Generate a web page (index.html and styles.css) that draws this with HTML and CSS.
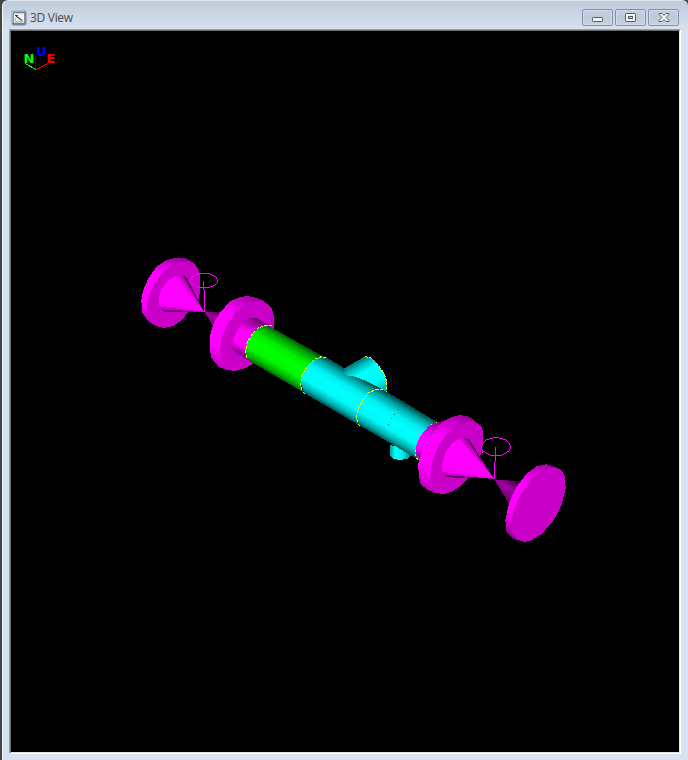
FILE: index.html
```
<!DOCTYPE html>
<html lang="en">
<head>
<meta charset="utf-8">
<title>3D View</title>
<link rel="stylesheet" href="styles.css">
</head>
<body>
<div class="window">
  <header class="titlebar">
    <svg class="app-icon" width="16" height="16" viewBox="0 0 16 16">
      <rect x=".5" y=".5" width="15" height="15" rx="2.5" fill="#7187a5" stroke="#a9b5c5"/>
      <path d="M1 13V3L3 1H13" fill="none" stroke="#c5ced9"/>
      <rect x="2.500" y="3" width="11" height="10" fill="#f4f4f4" stroke="#777" stroke-width=".6"/>
      <path d="M4 5.500h3M5 6l6 4.500" fill="none" stroke="#3d454c" stroke-width="1.200"/>
      <path d="M4.500 8v3.500H12" fill="none" stroke="#a8adb2" stroke-width=".8"/>
    </svg>
    <h1 class="title">3D View</h1>
    <div class="controls">
      <button class="control" aria-label="Minimize"><svg width="12" height="10" viewBox="0 0 12 10"><rect x=".5" y="4.500" width="10" height="4" rx=".7" fill="#f7f7f7" stroke="#555b6b"/></svg></button>
      <button class="control" aria-label="Maximize"><svg width="12" height="10" viewBox="0 0 12 10"><rect x=".5" y=".5" width="10" height="8" rx=".7" fill="#f7f7f7" stroke="#555b6b"/><rect x="3.500" y="3.500" width="4" height="2" fill="#c3d0e0" stroke="#555b6b"/></svg></button>
      <button class="control" aria-label="Close"><svg width="12" height="10" viewBox="0 0 12 10"><path d="M1 .5h3l2 2 2-2h3v1L8 4.500l3 3v1H8l-2-2-2 2H1v-1l3-3-3-3z" fill="#f7f7f7" stroke="#555b6b"/></svg></button>
    </div>
  </header>
  <main class="viewport">
    <svg class="scene" viewBox="11 31 668 721" shape-rendering="crispEdges">
      <defs>
        <linearGradient id="green" gradientUnits="userSpaceOnUse" x1="269" y1="325" x2="248" y2="361">
          <stop offset="0" stop-color="#005000"/><stop offset=".12" stop-color="#00a000"/><stop offset=".32" stop-color="#00ee00"/><stop offset=".5" stop-color="#0f0"/><stop offset=".72" stop-color="#00f800"/><stop offset=".9" stop-color="#00a800"/><stop offset="1" stop-color="#005000"/>
        </linearGradient>
        <linearGradient id="cyan" gradientUnits="userSpaceOnUse" x1="325" y1="357" x2="304" y2="393">
          <stop offset="0" stop-color="#005050"/><stop offset=".12" stop-color="#00a0a0"/><stop offset=".32" stop-color="#00f0f0"/><stop offset=".5" stop-color="#0ff"/><stop offset=".72" stop-color="#00f8f8"/><stop offset=".9" stop-color="#00a8a8"/><stop offset="1" stop-color="#005050"/>
        </linearGradient>
        <linearGradient id="branch" gradientUnits="userSpaceOnUse" x1="353" y1="363" x2="372" y2="396">
          <stop offset="0" stop-color="#007070"/><stop offset=".15" stop-color="#00b8b8"/><stop offset=".35" stop-color="#0ff"/><stop offset=".75" stop-color="#00f8f8"/><stop offset="1" stop-color="#00b0b0"/>
        </linearGradient>
        <linearGradient id="drain" gradientUnits="userSpaceOnUse" x1="390" y1="0" x2="411" y2="0">
          <stop offset="0" stop-color="#00a0a0"/><stop offset=".25" stop-color="#0ff"/><stop offset=".6" stop-color="#00f0f0"/><stop offset="1" stop-color="#007878"/>
        </linearGradient>
        <linearGradient id="neckA" gradientUnits="userSpaceOnUse" x1="375" y1="202" x2="320" y2="313">
          <stop offset="0" stop-color="#600060"/><stop offset=".15" stop-color="#a800a8"/><stop offset=".42" stop-color="#f0f"/><stop offset=".75" stop-color="#f0f"/><stop offset="1" stop-color="#700070"/>
        </linearGradient>
        <linearGradient id="neckB" gradientUnits="userSpaceOnUse" x1="82" y1="45" x2="26" y2="155">
          <stop offset="0" stop-color="#800080"/><stop offset=".2" stop-color="#c000c0"/><stop offset=".5" stop-color="#f0f"/><stop offset=".8" stop-color="#f0f"/><stop offset="1" stop-color="#a000a0"/>
        </linearGradient>
        <linearGradient id="rimA" gradientUnits="userSpaceOnUse" x1="180" y1="20" x2="50" y2="225">
          <stop offset="0" stop-color="#900090"/><stop offset=".4" stop-color="#f0f"/><stop offset=".8" stop-color="#f0f"/><stop offset="1" stop-color="#a000a0"/>
        </linearGradient>
        <linearGradient id="rimB" gradientUnits="userSpaceOnUse" x1="410" y1="140" x2="260" y2="355">
          <stop offset="0" stop-color="#900090"/><stop offset=".4" stop-color="#f0f"/><stop offset=".8" stop-color="#f0f"/><stop offset="1" stop-color="#b000b0"/>
        </linearGradient>
        <linearGradient id="rimC" gradientUnits="userSpaceOnUse" x1="200" y1="35" x2="50" y2="260">
          <stop offset="0" stop-color="#900090"/><stop offset=".4" stop-color="#f0f"/><stop offset=".8" stop-color="#f0f"/><stop offset="1" stop-color="#b000b0"/>
        </linearGradient>
        <linearGradient id="rimD" gradientUnits="userSpaceOnUse" x1="440" y1="180" x2="305" y2="400">
          <stop offset="0" stop-color="#a000a0"/><stop offset=".4" stop-color="#f0f"/><stop offset=".75" stop-color="#f0f"/><stop offset="1" stop-color="#900090"/>
        </linearGradient>
        <linearGradient id="backA" gradientUnits="userSpaceOnUse" x1="260" y1="183" x2="240" y2="215">
          <stop offset="0" stop-color="#500050"/><stop offset=".5" stop-color="#a000a0"/><stop offset="1" stop-color="#800080"/>
        </linearGradient>
        <linearGradient id="backB" gradientUnits="userSpaceOnUse" x1="315" y1="225" x2="280" y2="275">
          <stop offset="0" stop-color="#480048"/><stop offset=".5" stop-color="#a000a0"/><stop offset="1" stop-color="#700070"/>
        </linearGradient>
      </defs>

      <g class="axis">
        <path d="M25 63.5L36 69.5" stroke="#0f0"/>
        <path d="M36 69.5L48 63.5" stroke="#f00"/>
        <path d="M35.5 56V69" stroke="#00f"/>
        <text x="23.500" y="63" fill="#0f0">N</text>
        <text x="36" y="56" fill="#00f">U</text>
        <text x="46.500" y="63" fill="#f00">E</text>
      </g>

      <g transform="translate(130 250) scale(.33333)">
        <path fill="url(#rimA)" d="M145 22L110 30 80 50 55 85 38 125 34 150 36 185 50 208 70 225 100 234 130 225 160 200 200 130 207 65 195 42 170 26z"/>
        <path fill="#c800c8" d="M207 62L195 44 175 34 150 37 120 50 92 75 68 110 54 145 50 175 56 205 72 225 100 234 130 228 155 210 180 180 205 148 210 125 210 80z"/>
        <g>
          <path fill="#400040" d="M222 185L172 86 162 78z"/>
          <path fill="#700070" d="M222 185L166 82 158 77z"/>
          <path fill="#a000a0" d="M222 185L160 78 152 76z"/>
          <path fill="#c800c8" d="M222 185L154 76 144 77z"/>
          <path fill="#e800e8" d="M222 185L146 76 133 79z"/>
          <path fill="#f0f" d="M222 185L134 79 120 87 105 102 93 120 86 143 86 160z"/>
          <path fill="#f000f0" d="M222 185L86 158 89 172z"/>
          <path fill="#c800c8" d="M222 185L89 170 95 179z"/>
          <path fill="#780078" d="M222 185L94 178 102 185z"/>
        </g>
        <path fill="url(#backA)" d="M225 186L277 187 251 232z"/>
        <ellipse class="wire" cx="222" cy="92" rx="41" ry="22"/>
        <path class="wire" d="M221 94V120H223.500V185"/>
        <path fill="url(#rimB)" d="M350 138L325 143 300 155 270 187 250 222 240 257 240 302 245 325 265 350 290 361 318 362 400 250 431 190 418 167 395 149 375 142z"/>
        <path fill="#c800c8" d="M400 154L378 153 350 163 318 188 292 222 275 265 270 300 276 330 292 354 318 362 345 355 367 343 410 270 432 245 432 200 424 172z"/>
        <path fill="url(#neckA)" d="M378 204L362 204 344 212 325 235 311 265 306 296 318 309 352 329 390 260 418 226z"/>
      </g>

      <path fill="url(#branch)" d="M343 369L365 356.500 371 358 378 365 384 373 387 382 386 392 340 378z"/>
      <path fill="url(#drain)" d="M390 445V455L393 459 400 460 408 458.500 411 456V450z"/>
      <path fill="url(#cyan)" d="M326 357L343.500 367.500 343.500 373 347 375.700 355 376.700 365 380.700 382 389 438 422.500 442 440 419 460 304 393 300 380 302 370 309 362 319 356z"/>
      <path fill="url(#green)" d="M267 325L324 357 318 358 309 364 302 374 300.500 384 303 392 247 359.500 245.500 350 247 342 253 333 260 327z"/>
      <g class="joint">
        <path d="M272 325.500L266 325.500 258 328 251.500 335 247 343 245.500 351 247 359"/>
        <path d="M326 358L322 356.500 315 359 307 367 302 375 300.500 384 302 391 305 394"/>
        <path d="M365 356.500L371 358 378 365 384 373 387 382 386 392"/>
        <path d="M383 390L376 389.500 368 393 361.500 402 357.500 410 356.500 418 358 424 361 427"/>
        <path d="M442 423L437 422.500 430 425.500 422 435 417 445 415.500 453 416.500 458 419 461"/>
      </g>
      <path class="pipe-seam" d="M410.500 406.500L399.500 408.500 393.500 415.500 389.500 421.500 387.500 426.500"/>

      <g transform="translate(410 405) scale(.33333)">
        <path fill="url(#neckB)" d="M80 53L55 64 32 92 19 120 17 148 30 162 80 120 115 43z"/>
        <ellipse class="wire" cx="258" cy="125" rx="44" ry="27"/>
        <path fill="url(#rimC)" d="M148 30L120 38 95 54 60 92 38 132 25 175 26 212 32 237 50 253 75 264 105 267 190 150 210 65 185 40 170 33z"/>
        <path fill="#c800c8" d="M192 48L170 50 140 63 110 88 85 122 68 165 60 205 66 235 80 258 105 267 130 258 152 243 175 219 202 165 212 150 220 110 220 80 213 62z"/>
        <path class="flange-seam" d="M95 57L67 92 50 126 42 160 37 190 42 225 60 250"/>
        <g>
          <path fill="#400040" d="M252 221L178 104 168 98z"/>
          <path fill="#700070" d="M252 221L173 101 164 98z"/>
          <path fill="#a800a8" d="M252 221L167 98 157 98z"/>
          <path fill="#d800d8" d="M252 221L159 98 147 101z"/>
          <path fill="#f0f" d="M252 221L148 101 128 113 110 136 98 168 96 190z"/>
          <path fill="#f400f4" d="M252 221L96 188 98 203z"/>
          <path fill="#c800c8" d="M252 221L98 201 103 212z"/>
          <path fill="#680068" d="M252 221L103 210 110 217z"/>
        </g>
        <path fill="url(#backB)" d="M254 224L337 229 297 297z"/>
        <path class="wire" d="M256.500 126V172H254V222"/>
        <path class="rim-wire" d="M219 110L214 126 219 143"/>
        <path fill="url(#rimD)" d="M408 178L380 184 350 206 318 248 297 295 286 345 290 381 310 401 345 411 400 300 438 187z"/>
        <path fill="#c800c8" d="M438 187L415 190 390 202 360 230 330 272 310 318 303 355 307 385 322 404 345 411 362 407 395 387 430 347 455 300 467 250 465 215 454 195z"/>
      </g>
    </svg>
  </main>
</div>
</body>
</html>
```
FILE: styles.css
```
* {
  box-sizing: border-box;
}

body {
  margin: 0;
  background: #45464b;
}

.window {
  display: flex;
  flex-direction: column;
  width: 686px;
  height: 760px;
  margin-left: 2px;
  padding: 0 7px 6px 6px;
  border-left: 1px solid #f3f6fa;
  border-top: 1px solid #dfe5eb;
  border-radius: 6px 6px 0 0;
  background: linear-gradient(#bfcbda 0, #d7e3f0 30px, #d7e3f0 100%);
}

.titlebar {
  display: flex;
  align-items: center;
  height: 28px;
  flex: none;
  padding: 5px 2px 0 2px;
}

.app-icon {
  flex: none;
}

.title {
  flex: 1;
  margin: 0 0 0 3px;
  color: #4c4c4c;
  font: 12px/16px "Open Sans", "Noto Sans", sans-serif;
  letter-spacing: -0.3px;
}

.controls {
  display: flex;
  gap: 2px;
}

.control {
  display: flex;
  align-items: center;
  justify-content: center;
  width: 31px;
  height: 17px;
  padding: 0;
  border: 1px solid #8493ad;
  border-radius: 2px;
  background: linear-gradient(#c5d1df, #bccada 50%, #c8d4e2);
  box-shadow: inset 0 0 0 1px #d0dae6;
}

.viewport {
  flex: 1;
  min-height: 0;
  border: 1px solid;
  border-color: #a0a0a0 #fff #fff #a0a0a0;
  background: #000;
}

.scene {
  display: block;
  width: 670px;
  height: 723px;
  border: 1px solid;
  border-color: #696969 #e3e3e3 #e3e3e3 #696969;
}

.axis path,
.joint path {
  fill: none;
  stroke-width: 1;
}

.axis text {
  font: bold 13px "DejaVu Sans", sans-serif;
}

.joint path {
  stroke: #ff0;
  stroke-dasharray: 3 1.5;
}

.wire,
.rim-wire {
  fill: none;
  stroke: #f0f;
  stroke-width: 3;
}

.rim-wire {
  stroke: #e000e0;
}

.pipe-seam {
  fill: none;
  stroke: #008080;
  stroke-dasharray: 1 5;
}

.flange-seam {
  fill: none;
  stroke: #a000a0;
  stroke-width: 3;
  stroke-dasharray: 3 12;
}
```
